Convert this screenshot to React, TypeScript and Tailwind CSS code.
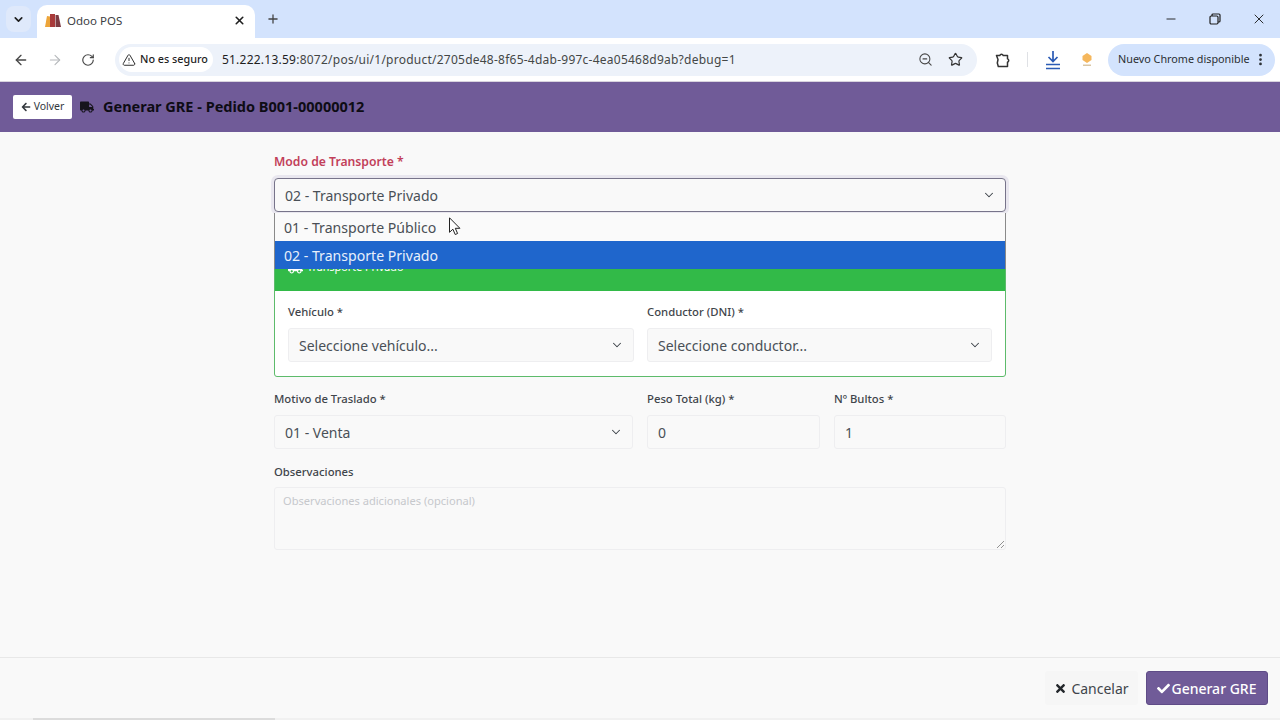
import {
  ArrowLeft,
  ArrowRight,
  ChevronDown,
  EllipsisVertical,
  Minus,
  Plus,
  RotateCw,
  Star,
  TriangleAlert,
  X,
  ZoomOut,
} from "lucide-react";
import { FaArrowLeft, FaCheck, FaTimes, FaTruck } from "react-icons/fa";

function Field({ label, className = "", children }: { label: string; className?: string; children: React.ReactNode }) {
  return (
    <div className={className}>
      <div className="mb-[7px] h-[19px] text-[11.3px] leading-[19px] font-medium text-[#3f454b]">{label}</div>
      {children}
    </div>
  );
}

function SelectBox({ value }: { value: string }) {
  return (
    <div className="flex h-[34px] items-center justify-between rounded-[3px] border border-[#eeeef0] bg-[#f9f9f9] pr-[9px] pl-[10px] text-[14px] text-[#495057]">
      <span>{value}</span>
      <ChevronDown size={14} strokeWidth={1.8} className="text-[#3c4248]" />
    </div>
  );
}

function InputBox({ value }: { value: string }) {
  return (
    <div className="flex h-[34px] items-center rounded-[3px] border border-[#eeeef0] bg-[#f9f9f9] pl-[10px] text-[14px] text-[#495057]">
      {value}
    </div>
  );
}

function ChromeBar() {
  return (
    <>
      <div className="flex h-[38px] shrink-0 bg-[#d3e3fd] text-[#1f1f1f]">
        <div className="mt-[6px] ml-[6px] flex h-[26px] w-[25px] items-center justify-center rounded-[8px] bg-[#dfe9fb]">
          <ChevronDown size={13} strokeWidth={3} />
        </div>
        <div className="mt-[5px] ml-[6px] flex h-[33px] w-[218px] items-center rounded-t-[10px] bg-white pr-[9px] pl-[8px] pb-[2px]">
          <svg width="16" height="13" viewBox="0 0 16 13" className="shrink-0">
            <path d="M0 13 2 2l3 .5V13z" fill="#eda53a" />
            <path d="M5 0h5v13H5z" fill="#a83a3a" />
            <path d="M10.500 1h3L16 13h-5.500z" fill="#7c3a42" />
          </svg>
          <span className="ml-[6px] flex-1 text-[11.5px] text-[#3c4043]">Odoo POS</span>
          <X size={13} strokeWidth={3} />
        </div>
        <Plus size={14} strokeWidth={2.2} className="mt-[12px] ml-[11px] text-[#444]" />
        <div className="ml-auto flex items-center pr-[13px] pb-[1px]">
          <Minus size={14} strokeWidth={1.6} className="mr-[31px]" />
          <svg width="12" height="12" viewBox="0 0 12 12" fill="none" stroke="#1f1f1f" strokeWidth="1.2" className="mr-[30px]">
            <rect x="1" y="3" width="8" height="8" rx="1.2" />
            <path d="M3 3V2a1 1 0 0 1 1-1h6a1 1 0 0 1 1 1v6a1 1 0 0 1-1 1H9" />
          </svg>
          <X size={16} strokeWidth={1.4} />
        </div>
      </div>
      <div className="flex h-[44px] shrink-0 items-center border-b border-[#d8d3de] bg-white text-[#474747]">
        <ArrowLeft size={16} strokeWidth={2} className="ml-[13px]" />
        <ArrowRight size={16} strokeWidth={1.6} className="ml-[18px] text-[#b5b8bb]" />
        <RotateCw size={14} strokeWidth={2} className="ml-[18px]" />
        <div className="ml-[20px] flex h-[32px] w-[862px] items-center rounded-full bg-[#edf2fa] pr-[14px] pl-[4px]">
          <div className="flex h-[25px] items-center rounded-full bg-white pr-[5px] pl-[3px] text-[10.8px] font-medium text-[#1f1f1f]">
            <TriangleAlert size={14} strokeWidth={1.6} className="mr-[4px]" />
            No es seguro
          </div>
          <div className="ml-[9px] flex-1 truncate text-[12px] tracking-[0.02em] text-[#444746]">
            <span className="text-[#1f1f1f]">51.222.13.59</span>:8072/pos/ui/1/product/2705de48-8f65-4dab-997c-4ea05468d9ab?debug=1
          </div>
          <ZoomOut size={15} strokeWidth={1.7} className="mr-[15px]" />
          <Star size={15} strokeWidth={1.9} className="text-[#333]" />
        </div>
        <svg width="16" height="16" viewBox="0 0 16 16" fill="none" stroke="#333" strokeWidth="1.5" strokeLinejoin="round" className="ml-[18px]">
          <path d="M1.500 3.500h3.300a1.800 1.800 0 0 1 3.400 0h4.300v3.300a1.800 1.800 0 0 1 0 3.400v4.300H3.300l-1-3.500 .7-3.500-1.500-4z" />
        </svg>
        <div className="ml-[16px] h-[15px] w-px bg-[#dfe1e5]" />
        <svg width="16" height="20" viewBox="0 0 16 20" fill="none" stroke="#2b5bb5" strokeWidth="1.7" className="ml-[17px]">
          <path d="M8 1v10M3.500 7 8 11.500 12.500 7M1 14.500h14M1 18.500h14" />
        </svg>
        <svg width="12" height="14" viewBox="0 0 12 14" className="ml-[20px]">
          <path d="M6 0 10.500 3v4L6 10 1.500 7V3z" fill="#f5b75c" />
          <rect x="2" y="11.500" width="8" height="1.500" fill="#d9c6a5" />
        </svg>
        <div className="ml-[15px] flex h-[32px] w-[167px] items-center rounded-full bg-[#d3e3fd] pl-[10px] text-[10.8px] whitespace-nowrap text-[#2b2f33]">
          Nuevo Chrome disponible
          <EllipsisVertical size={15} strokeWidth={2.4} className="ml-[3px]" />
        </div>
      </div>
    </>
  );
}

export default function App() {
  return (
    <div
      className="relative flex h-[720px] w-[1280px] flex-col overflow-hidden bg-[#f9f9f9]"
      style={{ fontFamily: '"Noto Sans", "Open Sans", sans-serif' }}
    >
      <ChromeBar />

      <div className="flex h-[50px] shrink-0 items-center bg-[#705b98] pb-[1px] pl-[13px]">
        <button className="flex h-[24px] w-[59px] items-center justify-center gap-[3px] rounded-[2px] bg-white text-[10.5px] text-[#33383d]">
          <FaArrowLeft size={10} />
          Volver
        </button>
        <FaTruck size={14} className="ml-[8px] text-[#16141c]" />
        <h1 className="ml-[9px] text-[14.5px] font-bold text-[#0e0c14]">Generar GRE - Pedido B001-00000012</h1>
      </div>

      <main className="min-h-0 flex-1">
        <div className="relative mx-auto w-[732px] pt-[20px]">
          <div className="mb-[7px] h-[19px] text-[12.2px] leading-[20px] font-semibold text-[#c2405a]">Modo de Transporte *</div>
          <div className="flex h-[34px] items-center justify-between rounded-[4px] border border-[#77748a] bg-[#f9f9f9] pr-[9px] pl-[10px] text-[14px] text-[#495057] shadow-[0_0_0_3px_#e9e7ef]">
            <span>02 - Transporte Privado</span>
            <ChevronDown size={14} strokeWidth={1.8} className="text-[#3c4248]" />
          </div>

          {/* opened native dropdown, lies over the green card */}
          <div className="absolute top-[81px] right-0 left-0 z-10 border-x border-[#8a8a8a] bg-[#fafafa] text-[14.1px]">
            <div className="flex h-[28px] items-center pt-[2px] pl-[9px] text-[#4a4f55]">01 - Transporte Público</div>
            <div className="flex h-[28px] items-center bg-[#1f66cc] pt-[1px] pl-[9px] text-[#e8f0fb]">02 - Transporte Privado</div>
          </div>

          <div className="mt-[32px] overflow-hidden rounded-[3px] border border-[#5dbb6b] bg-white">
            <div className="flex h-[46px] items-center gap-[4px] bg-[#32ba48] pb-[2px] pl-[13px] text-[10.8px] text-white">
              <FaTruck size={15} />
              Transporte Privado
            </div>
            <div className="grid grid-cols-[346px_345px] gap-x-[13px] px-[13px] pt-[11px] pb-[14px]">
              <Field label="Vehículo *">
                <SelectBox value="Seleccione vehículo..." />
              </Field>
              <Field label="Conductor (DNI) *">
                <SelectBox value="Seleccione conductor..." />
              </Field>
            </div>
          </div>

          <div className="mt-[12px] grid grid-cols-[359px_173px_172px] gap-x-[14px]">
            <Field label="Motivo de Traslado *">
              <SelectBox value="01 - Venta" />
            </Field>
            <Field label="Peso Total (kg) *">
              <InputBox value="0" />
            </Field>
            <Field label="Nº Bultos *">
              <InputBox value="1" />
            </Field>
          </div>

          <Field label="Observaciones" className="mt-[13px]">
            <div className="relative -mt-px h-[63px] rounded-[3px] border border-[#eeeef0] bg-[#f9f9f9] px-[8px] pt-[5px] text-[11.1px] text-[#c6c8cc]">
              Observaciones adicionales (opcional)
              <svg width="7" height="7" viewBox="0 0 7 7" stroke="#777" strokeWidth="0.8" className="absolute right-[1px] bottom-[1px]">
                <path d="M0 7 7 0M4 7l3-3" />
              </svg>
            </div>
          </Field>
        </div>
      </main>

      <footer className="flex h-[61px] shrink-0 items-start justify-end gap-[8px] border-t border-[#e8e8e8] pt-[13px] pr-[12px]">
        <button className="flex h-[34px] w-[93px] items-center justify-center gap-[4px] rounded-[3px] bg-[#f6f6f6] text-[14px] text-[#3f454b]">
          <FaTimes size={13} className="text-[#23272b]" />
          Cancelar
        </button>
        <button className="flex h-[34px] w-[122px] items-center justify-center gap-[1px] rounded-[3px] border border-[#5f4c87] bg-[#705b98] text-[14px] font-medium text-white">
          <FaCheck size={13} />
          Generar GRE
        </button>
      </footer>
      <div className="flex h-[2px] shrink-0 bg-[#f1f1f1] pl-[33px]">
        <div className="h-[2px] w-[242px] bg-[#dcdcdc]" />
      </div>

      {/* mouse pointer */}
      <svg width="12" height="19" viewBox="0 0 12 19" className="absolute top-[217px] left-[449px] z-20">
        <path d="M.5.800v14.500l3.400-3.100 2.300 5.300 2.400-1-2.300-5.200h4.600z" fill="#fff" stroke="#222" strokeWidth="1" />
      </svg>
    </div>
  );
}
